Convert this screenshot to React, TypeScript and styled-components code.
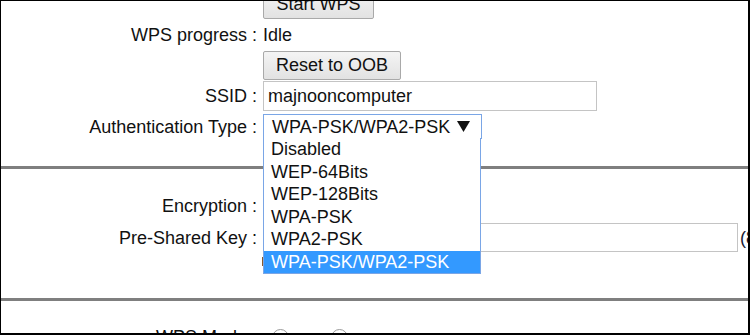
import React from 'react'
import styled, { createGlobalStyle } from 'styled-components'

const GlobalStyle = createGlobalStyle`
  html, body {
    margin: 0;
    padding: 0;
    background: #fff;
  }
  body {
    font-family: 'Liberation Sans', Arial, sans-serif;
    font-size: 18px;
    color: #111;
  }
`

const Frame = styled.div`
  box-sizing: border-box;
  width: 750px;
  height: 335px;
  overflow: hidden;
  border-top: 1px solid #000;
  border-left: 1px solid #000;
  border-right: 2px solid #000;
  border-bottom: 2px solid #000;
  background: #fff;
`

const Section = styled.div<{ $pt: number; $h: number }>`
  box-sizing: border-box;
  display: flex;
  flex-direction: column;
  flex-shrink: 0;
  height: ${p => p.$h}px;
  padding-top: ${p => p.$pt}px;
`

const Divider = styled.div`
  height: 3px;
  background: #7f7f7f;
`

const Row = styled.div<{ $h: number; $mt?: number }>`
  display: grid;
  grid-template-columns: 256px 1fr;
  column-gap: 6px;
  align-items: center;
  flex-shrink: 0;
  height: ${p => p.$h}px;
  margin-top: ${p => p.$mt ?? 0}px;
`

const Label = styled.div`
  text-align: right;
  white-space: nowrap;
  line-height: 22px;
`

const Value = styled.div`
  display: flex;
  align-items: center;
  position: relative;
  white-space: nowrap;
  line-height: 22px;
`

const Button = styled.button<{ $w: number }>`
  box-sizing: border-box;
  width: ${p => p.$w}px;
  height: 29px;
  padding: 0;
  font-family: inherit;
  font-size: 18px;
  color: #111;
  background: linear-gradient(#f4f4f4, #e2e2e2);
  border: 1px solid #a9a9a9;
  border-radius: 2px;
  text-align: center;
`

const TextBox = styled.div<{ $w: number; $h: number }>`
  box-sizing: border-box;
  width: ${p => p.$w}px;
  height: ${p => p.$h}px;
  border: 1px solid #c4c4c4;
  padding: 0 4px;
  display: flex;
  align-items: center;
  background: #fff;
`

const Select = styled.div<{ $focus?: boolean }>`
  box-sizing: border-box;
  width: 219px;
  height: 25px;
  display: flex;
  align-items: center;
  justify-content: space-between;
  padding: 0 11px 0 8px;
  border: 1px solid ${p => (p.$focus ? '#7aa6e6' : '#bdbdbd')};
  background: #fff;
`

const OptionList = styled.div`
  position: absolute;
  top: 24px;
  left: 0;
  width: 218px;
  box-sizing: border-box;
  border: 1px solid #7aa6e6;
  border-top: none;
  background: #fff;
  z-index: 2;
`

const Option = styled.div<{ $active?: boolean }>`
  height: 22.5px;
  line-height: 22.5px;
  padding-left: 7px;
  background: ${p => (p.$active ? '#3399ff' : '#fff')};
  color: ${p => (p.$active ? '#fff' : '#111')};
`

const Hint = styled.span`
  margin-left: 2px;
  color: #1a1a33;
`

const Check = styled.div`
  width: 8px;
  height: 9px;
  margin-left: -1px;
  border-left: 2px solid #8a5a2a;
`

const Radio = styled.span`
  box-sizing: border-box;
  width: 17px;
  height: 17px;
  border-radius: 50%;
  border: 1px solid #9a9a9a;
  background: #fff;
  margin-left: 9px;
  margin-right: 33px;
`

const DownArrow = () => (
  <svg width="13" height="11" viewBox="0 0 13 11">
    <polygon points="0,0 13,0 6.5,11" fill="#111" />
  </svg>
)

const authOptions = ['Disabled', 'WEP-64Bits', 'WEP-128Bits', 'WPA-PSK', 'WPA2-PSK', 'WPA-PSK/WPA2-PSK']

export default function App() {
  const current = 'WPA-PSK/WPA2-PSK'
  return (
    <>
      <GlobalStyle />
      <Frame>
        <Section $pt={0} $h={165}>
          <Row $h={29} $mt={-11}>
            <Label />
            <Value>
              <Button $w={111}>Start WPS</Button>
            </Value>
          </Row>
          <Row $h={32}>
            <Label>WPS progress :</Label>
            <Value>Idle</Value>
          </Row>
          <Row $h={29}>
            <Label />
            <Value>
              <Button $w={138}>Reset to OOB</Button>
            </Value>
          </Row>
          <Row $h={30} $mt={1}>
            <Label>SSID :</Label>
            <Value>
              <TextBox $w={334} $h={30}>majnooncomputer</TextBox>
            </Value>
          </Row>
          <Row $h={25} $mt={3}>
            <Label>Authentication Type :</Label>
            <Value>
              <Select $focus>
                <span>{current}</span>
                <DownArrow />
              </Select>
              <OptionList>
                {authOptions.map(o => (
                  <Option key={o} $active={o === current}>{o}</Option>
                ))}
              </OptionList>
            </Value>
          </Row>
        </Section>
        <Divider />
        <Section $pt={23} $h={129}>
          <Row $h={28}>
            <Label>Encryption :</Label>
            <Value>
              <TextBox $w={180} $h={28}>AES</TextBox>
            </Value>
          </Row>
          <Row $h={29} $mt={3}>
            <Label>Pre-Shared Key :</Label>
            <Value>
              <TextBox $w={475} $h={29} />
              <Hint>(8~63 characters)</Hint>
            </Value>
          </Row>
          <Row $h={10} $mt={4}>
            <Label />
            <Value>
              <Check />
            </Value>
          </Row>
        </Section>
        <Divider />
        <Section $pt={25} $h={40}>
          <Row $h={22}>
            <Label>WPS Mode :</Label>
            <Value>
              <Radio />
              <Radio />
            </Value>
          </Row>
        </Section>
      </Frame>
    </>
  )
}
